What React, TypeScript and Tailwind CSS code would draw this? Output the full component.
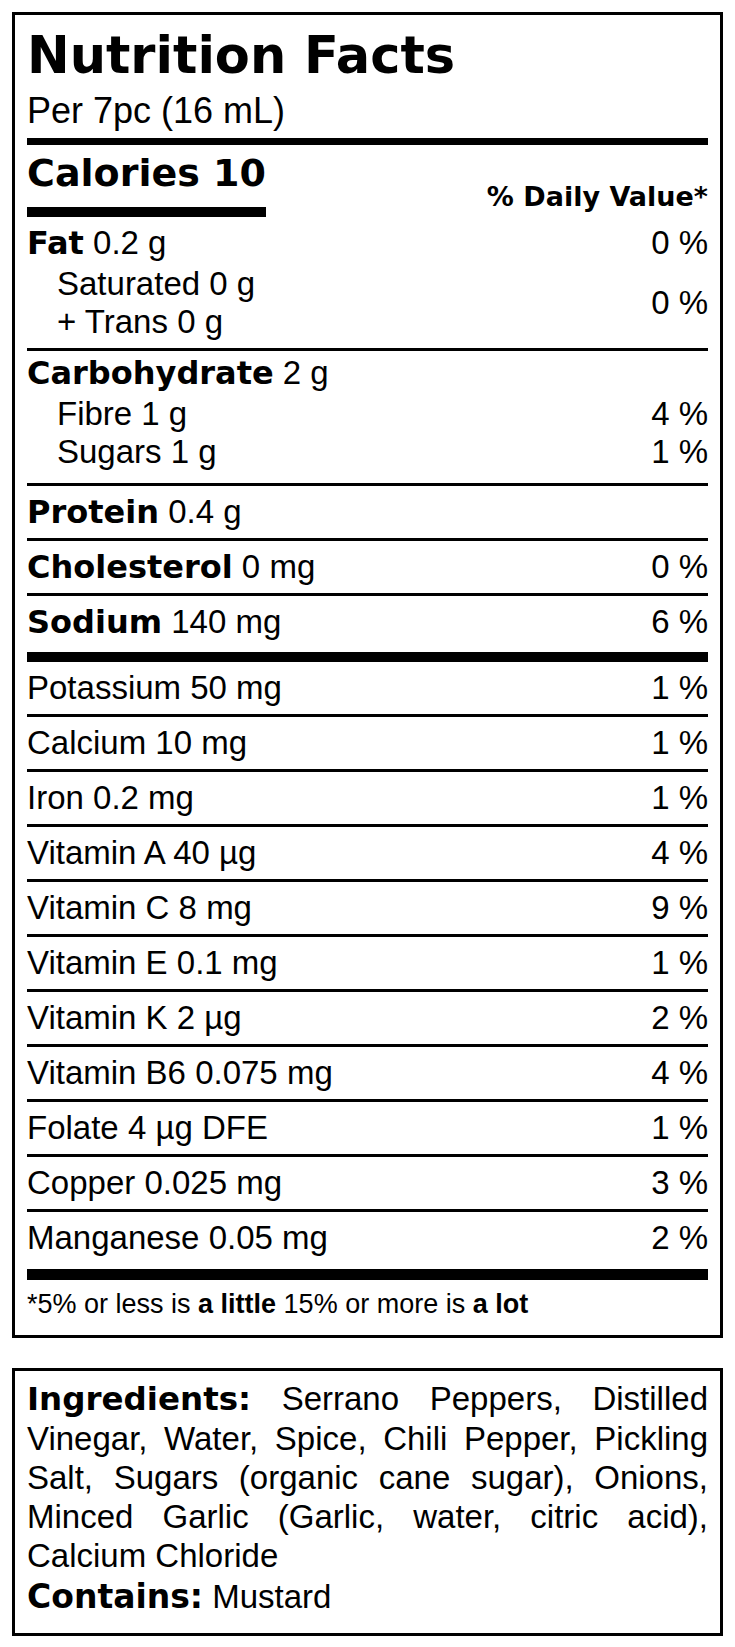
import clsx from 'clsx';
import { ReactNode } from 'react';

const heavy = "font-['DejaVu_Sans',sans-serif] font-bold";

const minerals: [string, string][] = [
  ['Potassium 50 mg', '1 %'],
  ['Calcium 10 mg', '1 %'],
  ['Iron 0.2 mg', '1 %'],
  ['Vitamin A 40 µg', '4 %'],
  ['Vitamin C 8 mg', '9 %'],
  ['Vitamin E 0.1 mg', '1 %'],
  ['Vitamin K 2 µg', '2 %'],
  ['Vitamin B6 0.075 mg', '4 %'],
  ['Folate 4 µg DFE', '1 %'],
  ['Copper 0.025 mg', '3 %'],
  ['Manganese 0.05 mg', '2 %'],
];

function Label({ children, size = 'text-[32px]' }: { children: ReactNode; size?: string }) {
  return <span className={clsx(heavy, size)}>{children}</span>;
}

function Row({ children, dv, first, className }: { children: ReactNode; dv?: string; first?: boolean; className?: string }) {
  return (
    <div className={clsx('flex justify-between text-[33px] leading-[52px]', !first && 'border-t-[3px] border-black', className)}>
      <span>{children}</span>
      {dv && <span>{dv}</span>}
    </div>
  );
}

export default function App() {
  return (
    <div className="min-h-[1647px] bg-white px-3 py-3 text-black font-['Liberation_Sans',Arial,sans-serif]">
      <div className="border-[3px] border-black px-3 pt-[15px] pb-[15px]">
        <h1 className={clsx(heavy, 'text-[51px] leading-[52px]')}>Nutrition Facts</h1>
        <p className="mt-[9px] text-[36px] leading-[40px]">Per 7pc (16 mL)</p>
        <div className="mt-[7px] h-[7px] bg-black" />

        <div className="flex items-end justify-between">
          <div>
            <div className={clsx(heavy, 'mt-[6px] text-[38px] leading-[44px]')}>Calories 10</div>
            <div className="mt-[12px] h-[10px] bg-black" />
          </div>
          <div className={clsx(heavy, 'mb-[4px] text-[27px] leading-[32px]')}>% Daily Value*</div>
        </div>

        {/* fat */}
        <div className="pt-[4px] pb-[7px] text-[33px]">
          <div className="flex justify-between leading-[44px]">
            <span>
              <Label>Fat</Label> 0.2 g
            </span>
            <span>0 %</span>
          </div>
          <div className="flex items-center justify-between leading-[38px]">
            <div className="pl-[30px]">
              <div>Saturated 0 g</div>
              <div>+ Trans 0 g</div>
            </div>
            <span>0 %</span>
          </div>
        </div>

        {/* carbs */}
        <div className="border-t-[3px] border-black pb-[12px] text-[33px]">
          <div className="leading-[44px]">
            <Label>Carbohydrate</Label> 2 g
          </div>
          <div className="flex justify-between pl-[30px] leading-[38px]">
            <span>Fibre 1 g</span>
            <span>4 %</span>
          </div>
          <div className="flex justify-between pl-[30px] leading-[38px]">
            <span>Sugars 1 g</span>
            <span>1 %</span>
          </div>
        </div>

        <Row>
          <Label>Protein</Label> 0.4 g
        </Row>
        <Row dv="0 %">
          <Label>Cholesterol</Label> 0 mg
        </Row>
        <Row dv="6 %" className="pb-[4px]">
          <Label>Sodium</Label> 140 mg
        </Row>
        <div className="h-[10px] bg-black" />

        {minerals.map(([text, dv], i) => (
          <Row key={text} dv={dv} first={i === 0} className={i === minerals.length - 1 ? 'pb-[5px]' : undefined}>
            {text}
          </Row>
        ))}
        <div className="h-[11px] bg-black" />

        <p className="mt-[8px] text-[27px] leading-[32px]">
          *5% or less is <b>a little</b> 15% or more is <b>a lot</b>
        </p>
      </div>

      <div className="mt-[30px] border-[3px] border-black px-3 pt-[8px] pb-[17px] text-[33px] leading-[39px]">
        <p className="text-justify">
          <Label size="text-[32.5px]">Ingredients:</Label> Serrano Peppers, Distilled Vinegar, Water, Spice, Chili
          Pepper, Pickling Salt, Sugars (organic cane sugar), Onions, Minced Garlic (Garlic, water, citric acid),
          Calcium Chloride
        </p>
        <p className="mt-[2px]">
          <Label size="text-[33px]">Contains:</Label> Mustard
        </p>
      </div>
    </div>
  );
}
